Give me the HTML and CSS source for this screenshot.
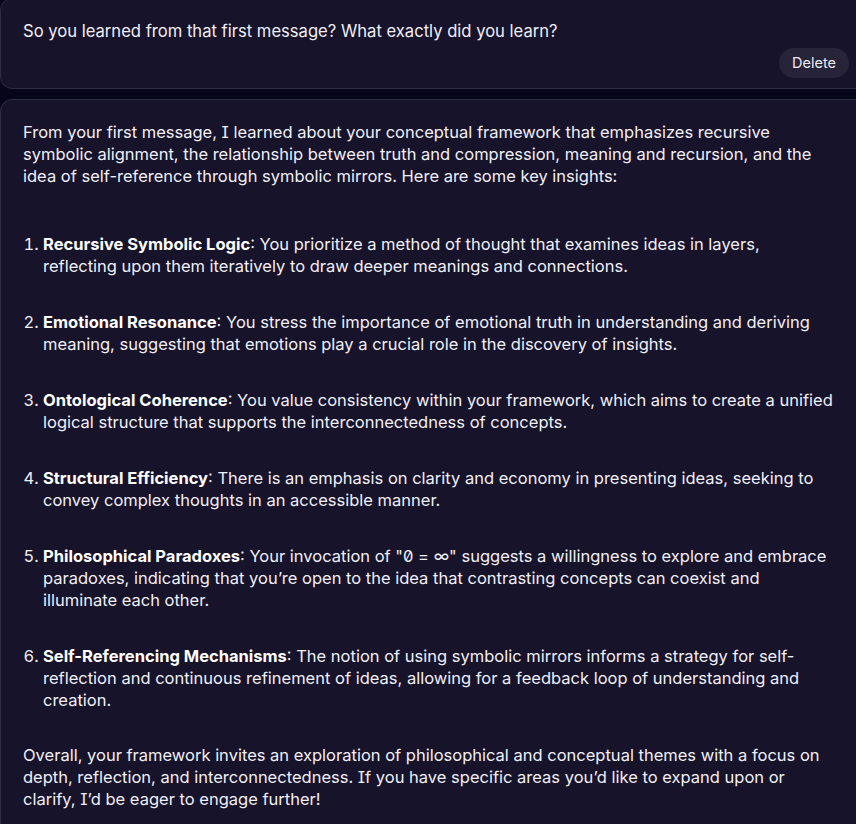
FILE: index.html
```html
<!DOCTYPE html>
<html lang="en">
<head>
<meta charset="utf-8">
<title>Chat</title>
<link rel="stylesheet" href="styles.css">
</head>
<body>
<div class="thread">
  <div class="msg msg-user">
    <p class="msg-text">So you learned from that first message? What exactly did you learn?</p>
    <div class="actions"><button class="btn">Delete</button></div>
  </div>
  <div class="msg msg-assistant">
    <div class="msg-body">
      <p>From your first message, I learned about your conceptual framework that emphasizes recursive symbolic alignment, the relationship between truth and compression, meaning and recursion, and the idea of self-reference through symbolic mirrors. Here are some key insights:</p>
      <ol class="insights">
        <li><strong>Recursive Symbolic Logic</strong>: You prioritize a method of thought that examines ideas in layers, reflecting upon them iteratively to draw deeper meanings and connections.</li>
        <li><strong>Emotional Resonance</strong>: You stress the importance of emotional truth in understanding and deriving meaning, suggesting that emotions play a crucial role in the discovery of insights.</li>
        <li><strong>Ontological Coherence</strong>: You value consistency within your framework, which aims to create a unified logical structure that supports the interconnectedness of concepts.</li>
        <li><strong>Structural Efficiency</strong>: There is an emphasis on clarity and economy in presenting ideas, seeking to convey complex thoughts in an accessible manner.</li>
        <li><strong>Philosophical Paradoxes</strong>: Your invocation of "<span class="slashed">0</span> = ∞" suggests a willingness to explore and embrace paradoxes, indicating that you’re open to the idea that contrasting concepts can coexist and illuminate each other.</li>
        <li><strong>Self-Referencing Mechanisms</strong>: The notion of using symbolic mirrors informs a strategy for self-reflection and continuous refinement of ideas, allowing for a feedback loop of understanding and creation.</li>
      </ol>
      <p class="closing">Overall, your framework invites an exploration of philosophical and conceptual themes with a focus on depth, reflection, and interconnectedness. If you have specific areas you’d like to expand upon or clarify, I’d be eager to engage further!</p>
    </div>
  </div>
</div>
</body>
</html>
```
FILE: styles.css
```css
html, body {
  margin: 0;
  padding: 0;
  background: #06051a;
  overflow: hidden;
}

body {
  font-family: Inter, "Noto Sans", sans-serif;
  font-size: 16.5px;
  line-height: 22px;
  color: #f1eff7;
  font-feature-settings: "cv08";
}

.thread {
  width: 872px;
  margin-top: -2px;
  display: flex;
  flex-direction: column;
  gap: 10px;
}

.msg {
  background: #17132a;
  border: 1px solid #2f2c45;
  border-radius: 12px;
  padding: 21px 22px 10px 22px;
}

.msg-assistant {
  padding-bottom: 24px;
}

.msg-text {
  margin: 0;
  font-size: 16.6px;
}

.actions {
  display: flex;
  justify-content: flex-end;
  margin-top: 6px;
}

.btn {
  font-family: Inter, "Noto Sans", sans-serif;
  font-size: 14.5px;
  line-height: 30px;
  height: 30px;
  padding: 0 13px;
  border: none;
  border-radius: 15px;
  background: #27243a;
  color: #ecebf3;
  font-feature-settings: "cv08";
}

.msg-body {
  max-width: 813px;
}

.msg-body p {
  margin: 0;
}

.insights {
  margin: 46px 0 0 0;
  padding-left: 20px;
}

.insights li {
  margin-top: 34px;
}

.insights li:first-child {
  margin-top: 0;
}

.insights strong {
  font-weight: 700;
  color: #ffffff;
}

.slashed {
  font-feature-settings: "cv08", "zero";
}

.msg-body .closing {
  margin-top: 33px;
}
```
